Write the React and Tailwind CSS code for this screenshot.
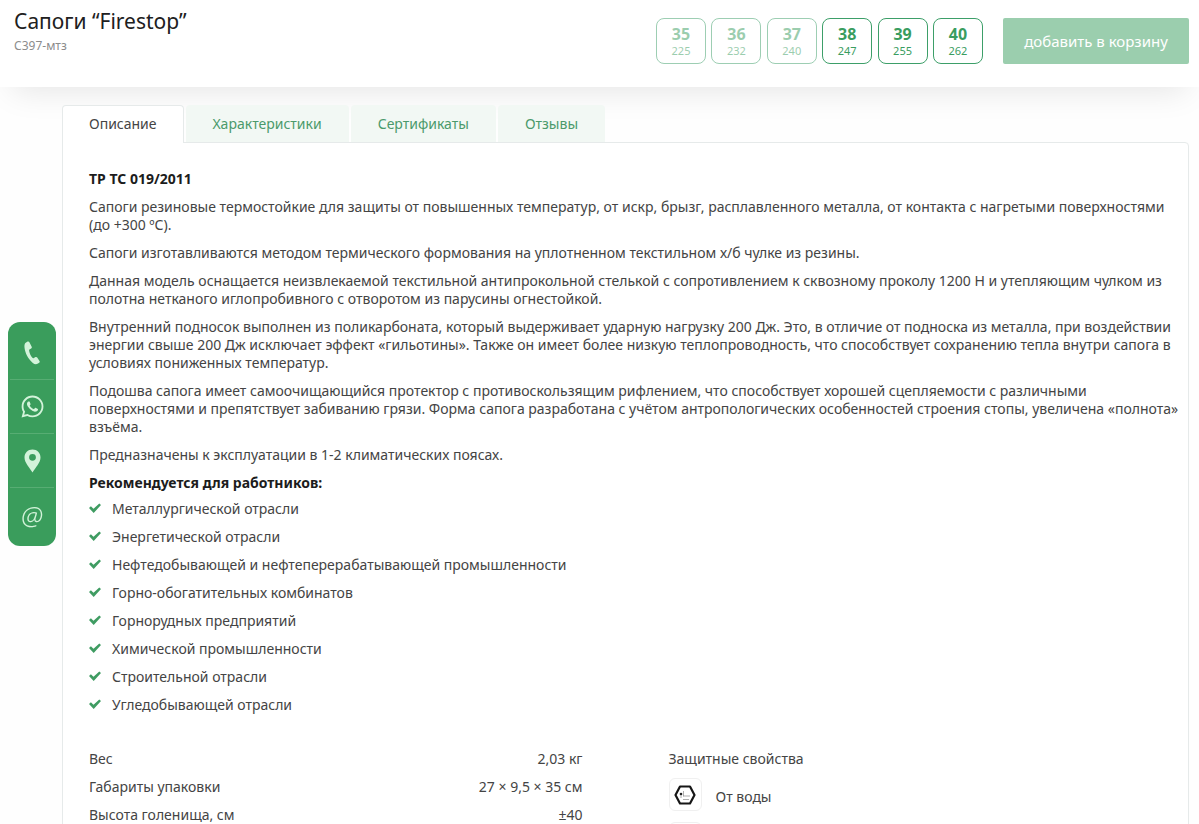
import React, { useState } from 'react'
import { FaWhatsapp } from 'react-icons/fa'

const sizes = [
  { eu: '35', mm: '225', available: false },
  { eu: '36', mm: '232', available: false },
  { eu: '37', mm: '240', available: false },
  { eu: '38', mm: '247', available: true },
  { eu: '39', mm: '255', available: true },
  { eu: '40', mm: '262', available: true },
]

const tabs = ['Описание', 'Характеристики', 'Сертификаты', 'Отзывы']

const paragraphs = [
  'Сапоги резиновые термостойкие для защиты от повышенных температур, от искр, брызг, расплавленного металла, от контакта с нагретыми поверхностями\n(до +300 ºС).',
  'Сапоги изготавливаются методом термического формования на уплотненном текстильном х/б чулке из резины.',
  'Данная модель оснащается неизвлекаемой текстильной антипрокольной стелькой с сопротивлением к сквозному проколу 1200 Н и утепляющим чулком из\nполотна нетканого иглопробивного с отворотом из парусины огнестойкой.',
  'Внутренний подносок выполнен из поликарбоната, который выдерживает ударную нагрузку 200 Дж. Это, в отличие от подноска из металла, при воздействии\nэнергии свыше 200 Дж исключает эффект «гильотины». Также он имеет более низкую теплопроводность, что способствует сохранению тепла внутри сапога в\nусловиях пониженных температур.',
  'Подошва сапога имеет самоочищающийся протектор с противоскользящим рифлением, что способствует хорошей сцепляемости с различными\nповерхностями и препятствует забиванию грязи. Форма сапога разработана с учётом антропологических особенностей строения стопы, увеличена «полнота»\nвзъёма.',
  'Предназначены к эксплуатации в 1-2 климатических поясах.',
]

const industries = [
  'Металлургической отрасли',
  'Энергетической отрасли',
  'Нефтедобывающей и нефтеперерабатывающей промышленности',
  'Горно-обогатительных комбинатов',
  'Горнорудных предприятий',
  'Химической промышленности',
  'Строительной отрасли',
  'Угледобывающей отрасли',
]

const specs = [
  ['Вес', '2,03 кг'],
  ['Габариты упаковки', '27 × 9,5 × 35 см'],
  ['Высота голенища, см', '±40'],
]

const PhoneIcon = () => (
  <svg viewBox="0 0 16 24" className="h-6 w-4" fill="currentColor" aria-hidden="true">
    <path d="M3.6.6 1.7 1.8C.5 2.7.3 4.500.5 6.500c.5 5.200 3.600 11.500 8.300 15.400 1.500 1.200 3.200 1.600 4.700.9l1.700-1c.6-.4.7-1.100.3-1.700l-2.300-3.600c-.4-.6-1.100-.8-1.700-.4l-1.600 1c-.6.3-1.100.2-1.500-.3-1.700-2-2.900-4.500-3.300-7-.1-.7.1-1.200.7-1.500l1.400-.8c.6-.4.8-1 .5-1.700L5.400 1.200C5.100.5 4.300.2 3.600.6Z" />
  </svg>
)

const PinIcon = () => (
  <svg viewBox="0 0 17 24" className="h-6 w-[17px]" fill="currentColor" aria-hidden="true">
    <path fillRule="evenodd" d="M8.500.5C3.900.5.5 4 .5 8.400c0 5.300 5.300 10.200 8 15.100 2.700-4.900 8-9.800 8-15.100C16.500 4 13.100.5 8.500.5Zm0 4.400a3.400 3.400 0 1 1 0 6.800 3.400 3.400 0 0 1 0-6.800Z" />
  </svg>
)

const CheckIcon = () => (
  <svg viewBox="0 0 12 12" className="h-3 w-3 shrink-0 text-[#3f9c62]" fill="currentColor" aria-hidden="true">
    <path d="M0 5 1.900 3.300 4.500 5.700 10.300.5 12 2.100 4.700 9.900Z" />
  </svg>
)

const WaterIcon = () => (
  <svg viewBox="0 0 22 20" className="h-5 w-[22px]" fill="none" aria-hidden="true">
    <path d="M6 1.500h10L20.500 10 16 18.500H6L1.500 10Z" stroke="#161616" strokeWidth="2.200" strokeLinejoin="round" />
    <circle cx="7" cy="9" r="1.300" fill="#222" />
    <path d="M7 10v3M9.500 6v5.500M9.500 11h6.500M9 14.500h6" stroke="#777" strokeWidth=".6" />
  </svg>
)

const contacts = [
  { label: 'Телефон', href: '#phone', icon: <PhoneIcon /> },
  { label: 'WhatsApp', href: '#whatsapp', icon: <FaWhatsapp size={25} /> },
  { label: 'Адрес', href: '#address', icon: <PinIcon /> },
  { label: 'Почта', href: '#mail', icon: <span className="text-[26px] leading-6 italic font-light">@</span> },
]

const App = () => {
  const [activeTab, setActiveTab] = useState(0)

  return (
    <div className="h-screen overflow-hidden bg-[#fefefe] font-['Noto_Sans','Open_Sans',sans-serif] text-sm leading-[18px] text-[#444444]">
      {/* Product bar */}
      <header className="relative flex h-[87px] items-start justify-between bg-white pr-[10px] pl-[14px] shadow-[0_16px_32px_-12px_rgba(0,0,0,0.1)]">
        <div className="pt-2">
          <h1 className="text-[21px] leading-[26px] text-[#202020]">Сапоги “Firestop”</h1>
          <p className="mt-1 text-xs leading-4 text-[#8c8c8c]">С397-мтз</p>
        </div>
        <div className="flex items-center gap-5 pt-[18px]">
          <div className="flex w-[327px] justify-between">
            {sizes.map((size) => (
              <button
                key={size.eu}
                type="button"
                disabled={!size.available}
                className="flex h-[46px] w-[50px] flex-col items-center justify-center rounded-lg border border-[#3d9f69] bg-white text-[#3a9d5f] disabled:opacity-50"
              >
                <span className="text-base leading-5 font-bold">{size.eu}</span>
                <span className="text-[11px] leading-[14px]">{size.mm}</span>
              </button>
            ))}
          </div>
          <button type="button" className="h-[46px] w-[186px] rounded-xs bg-[#9bceae] text-[15px] text-white">
            добавить в корзину
          </button>
        </div>
      </header>

      <main className="pt-[18px] pr-[10px] pl-[62px]">
        {/* Tabs */}
        <div role="tablist" className="relative flex h-[38px] gap-[2px]">
          {tabs.map((tab, i) => (
            <button
              key={tab}
              type="button"
              role="tab"
              aria-selected={activeTab === i}
              onClick={() => setActiveTab(i)}
              className={
                activeTab === i
                  ? 'h-[38px] rounded-t-sm border border-b-0 border-[#e6eaea] bg-white px-[26px] pb-[2px]'
                  : 'h-[37px] rounded-t-sm bg-[#f2f8f4] px-[27px] text-[#4b9a6b]'
              }
            >
              {tab}
            </button>
          ))}
        </div>

        <section className="-mt-px rounded-tr-sm border border-[#e6eaea] bg-white pt-[27px] pr-2 pb-10 pl-[26px]">
          <div className="flex flex-col gap-[10px]">
            <h2 className="font-bold text-[#1c1c1c]">ТР ТС 019/2011</h2>
            {paragraphs.map((text) => (
              <p key={text} className="whitespace-pre-line">{text}</p>
            ))}
            <h3 className="font-bold text-[#1c1c1c]">Рекомендуется для работников:</h3>
            <ul className="-mt-[2px] flex flex-col gap-[10px]">
              {industries.map((name) => (
                <li key={name} className="flex items-center gap-[11px]">
                  <CheckIcon />
                  {name}
                </li>
              ))}
            </ul>
          </div>

          <div className="mt-9 grid grid-cols-2 gap-x-[86px] pr-[18px]">
            <table className="h-fit w-full">
              <tbody>
                {specs.map(([name, value]) => (
                  <tr key={name}>
                    <th scope="row" className="pb-[10px] text-left font-normal">{name}</th>
                    <td className="pb-[10px] text-right">{value}</td>
                  </tr>
                ))}
              </tbody>
            </table>
            <div>
              <h3>Защитные свойства</h3>
              <div className="mt-[10px] flex items-center gap-[14px]">
                <span className="flex size-[33px] items-center justify-center rounded-md border border-[#f0f0f0]">
                  <WaterIcon />
                </span>
                <span className="pt-1">От воды</span>
              </div>
              <div className="mt-[11px] size-[33px] rounded-md border border-[#f0f0f0]" />
            </div>
          </div>
        </section>
      </main>

      {/* Contact buttons pinned to the left edge */}
      <nav className="fixed top-[322px] left-2 flex w-12 flex-col rounded-xl bg-[#3a9d5c] px-[2px] py-1 text-[#d3f3da]">
        {contacts.map((item) => (
          <a
            key={item.label}
            href={item.href}
            aria-label={item.label}
            className="flex h-[54px] items-center justify-center border-[#57ad73] not-last:border-b"
          >
            {item.icon}
          </a>
        ))}
      </nav>
    </div>
  )
}

export default App
